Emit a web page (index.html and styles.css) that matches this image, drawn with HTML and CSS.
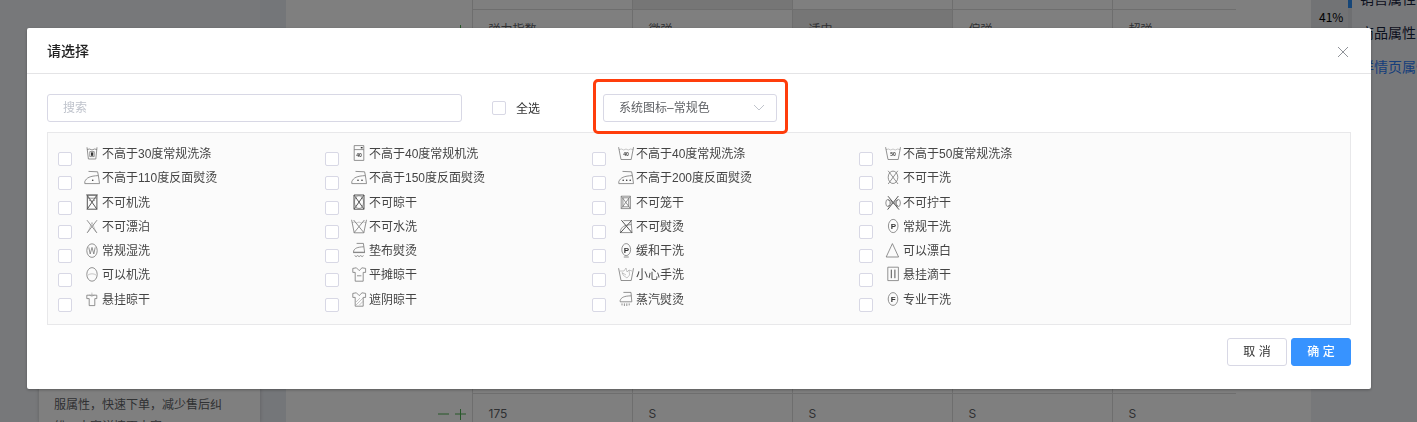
FILE: index.html
```html
<!DOCTYPE html>
<html lang="zh-CN">
<head>
<meta charset="utf-8">
<title>请选择</title>
<link rel="stylesheet" href="styles.css">
</head>
<body>
<svg class="sprite" aria-hidden="true">
  <symbol id="tub" viewBox="0 0 16 16"><path d="M.6 2.2 3 14.5h10.2L15.5 2.2"/><path class="faint" d="M1 4.6 3.5 4l2.2 1L8 4l2.3 1 2.2-1 2.6.6"/></symbol>
  <symbol id="wash30" viewBox="0 0 16 16"><path d="M3 2.3 4.4 14h7.4L13 2.3"/><path d="M3.2 4.5 5.5 4 8 5l2.5-1 2.4.5"/><path d="M5.8 6.6h4.4v5H5.8z"/><path class="solid" d="M7 7.4h2.2v3.4H7z"/></symbol>
  <symbol id="washer" viewBox="0 0 16 16"><path d="M3.2.6h9.6v14.8H3.2zM3.2 4.6h9.6"/><path class="solid" d="M9.8 2h1.8v1.4H9.8z"/></symbol>
  <symbol id="iron" viewBox="0 0 16 16"><path d="M4.5 2.4 13.6 2.8 14.4 6.6 15.5 14.6H.8V12.6C2.5 8.6 6 7 14.4 6.6"/></symbol>
  <symbol id="iron110" viewBox="0 0 16 16"><use href="#iron"/><circle class="dot" cx="8.7" cy="11.3" r=".8"/></symbol>
  <symbol id="iron150" viewBox="0 0 16 16"><use href="#iron"/><circle class="dot" cx="7" cy="11.3" r=".8"/><circle class="dot" cx="11" cy="11.3" r=".8"/></symbol>
  <symbol id="iron200" viewBox="0 0 16 16"><use href="#iron"/><circle class="dot" cx="5.2" cy="11.3" r=".8"/><circle class="dot" cx="8.7" cy="11.3" r=".8"/><circle class="dot" cx="12.2" cy="11.3" r=".8"/></symbol>
  <symbol id="no-dryclean" viewBox="0 0 16 16"><ellipse cx="8" cy="8.3" rx="4.8" ry="6.2"/><path d="M3.2 1.8 13 15M12.8 1.8 3.2 15"/></symbol>
  <symbol id="no-machine" viewBox="0 0 16 16"><path class="strong" d="M3.3 1.2h9.6v14H3.3zM3 1l10 14.4M13 1 3 15.4"/><path d="M2 .8h12M3.3 4.2h9.6M5 6l3 1.4L11 6"/></symbol>
  <symbol id="no-dry" viewBox="0 0 16 16"><path class="strong" d="M3 1h10v14.2H3zM3 1l10 14.2M13 1 3 15.2"/><ellipse cx="8" cy="8.1" rx="4.6" ry="6.4"/></symbol>
  <symbol id="no-tumble" viewBox="0 0 16 16"><path d="M3.2 2.2h9.2v12.4H3.2z"/><path d="M4.9 3.8h5.8v9H4.9zM3.2 2.2l9.2 12.4M12.4 2.2 3.2 14.6"/></symbol>
  <symbol id="no-wring" viewBox="0 0 16 16"><ellipse cx="3" cy="9" rx="2.2" ry="3.6"/><ellipse cx="13.2" cy="9" rx="2.2" ry="3.6"/><path class="strong" d="M3 2.2 14 15.6M13.4 2 2.6 15.6"/><path d="M3 6c4 0 6 5.6 10 5.6M3 12c4 0 6-5.6 10-5.6M4.8 9h7"/></symbol>
  <symbol id="no-bleach" viewBox="0 0 16 16"><path d="M3 2.2 13 15M13 2.2 3 15"/><path class="faint" d="M8 4.4 4 14M8 4.4 12 14"/></symbol>
  <symbol id="no-wash" viewBox="0 0 16 16"><path d="M.6 1.8 3.2 14.8h9.6L15.5 1.8"/><path d="M2.6 2 13 14.8M13.4 2 3 14.8"/><path class="faint" d="M1 4.6 3.5 4l2.2 1L8 4l2.3 1 2.2-1 2.6.6"/></symbol>
  <symbol id="no-iron" viewBox="0 0 16 16"><path d="M5.4 2.6H13l1 12H2.4v-2C3.6 9 6 7 13.4 6.6"/><path class="strong" d="M3.4 2.2 14.2 15M13.8 2.2 2.2 15"/></symbol>
  <symbol id="w-clean" viewBox="0 0 16 16"><ellipse cx="8" cy="8.6" rx="5.2" ry="6.8"/><path d="M4.8 5.4 6.2 12 8 5.4 9.8 12l1.4-6.6"/></symbol>
  <symbol id="cloth-iron" viewBox="0 0 16 16"><path d="M5.6 1.4H12.4l1.2 8.8H2.6V9C3.6 6.4 6 5 12.8 4.8M2 10.6h12"/><path d="m3.6 13.6 1.5 1 1.5-1 1.5 1 1.5-1 1.5 1 1.5-1"/></symbol>
  <symbol id="bleach" viewBox="0 0 16 16"><path d="M7.4 1.6 13.6 15H1.2z"/></symbol>
  <symbol id="machine" viewBox="0 0 16 16"><ellipse cx="8" cy="8.4" rx="5.2" ry="6.8"/><path class="faint" d="M4 9C6 7.4 10 7.4 12 9"/></symbol>
  <symbol id="shirt" viewBox="0 0 16 16"><path d="M5.4 1.8 1.8 2.4v4h2.4v8.8h8V6.4h2.4v-4L11 1.8 8.2 4.6z"/></symbol>
  <symbol id="flat-dry" viewBox="0 0 16 16"><use href="#shirt"/><path d="M6 9.8h4.4"/></symbol>
  <symbol id="hand-wash" viewBox="0 0 16 16"><path d="M.6 2.2 3 14.5h10.2L15.5 2.2"/><path class="faint" d="M2 5h4l2-3 1 4 2-2 .6 5L9 12 5.4 9.4 4 6.6 8 9M11 4l3 1"/></symbol>
  <symbol id="drip-dry" viewBox="0 0 16 16"><path d="M2.8 1.2h10.6v13.4H2.8z"/><path class="strong" d="M6.3 3.6v8.6M9.9 3.6v8.6"/></symbol>
  <symbol id="hang-dry" viewBox="0 0 16 16"><path d="M2.8 4.2h10v3.4h-2v7H5.2v-7H2.8z"/><path class="faint" d="M7.9 4.2V1.6M5.4 4l2.4 1.4L10.4 4"/></symbol>
  <symbol id="shade-dry" viewBox="0 0 16 16"><use href="#shirt"/><path class="faint" d="m5 11 4-4M5 14l7-7M8.4 14 12 10.4"/></symbol>
  <symbol id="steam-iron" viewBox="0 0 16 16"><path d="M5.4 1.4H13l.8 9.4H2.2V9.4C3.2 6.4 6 5 13.4 4.8"/><path d="M4 12.4v2M6.4 12.4V15M8.8 12.4V15M11.2 12.4v2"/></symbol>
</svg>

<div class="page">
  <aside class="side">
    <div class="tip">服属性，快速下单，减少售后纠纷，丰富详情更丰富</div>
  </aside>
  <main class="sheet">
    <table class="grid grid-top">
      <tr class="cut"><td class="ops"></td><td></td><td class="on"></td><td></td><td></td><td class="last"></td></tr>
      <tr><td class="ops"><svg class="pm" viewBox="0 0 32 12"><path d="M21 6h11M26.500 1v11"/></svg></td><td>弹力指数</td><td>微弹</td><td class="on">适中</td><td>偏弹</td><td class="last">超弹</td></tr>
    </table>
    <table class="grid">
      <tr><td class="ops"></td><td></td><td></td><td></td><td></td><td class="last"></td></tr>
      <tr><td class="ops"><svg class="pm" viewBox="0 0 32 12"><path d="M4 6h11M21 6h11M26.500 1v11"/></svg></td><td>175</td><td>S</td><td>S</td><td>S</td><td class="last">S</td></tr>
    </table>
  </main>
  <nav class="steps">
    <div class="percent">41%</div>
    <div class="track"><div class="bar"></div></div>
    <div class="links">
      <a href="#sale">销售属性</a>
      <a href="#goods">商品属性</a>
      <a href="#detail" class="current">详情页属性</a>
    </div>
  </nav>
</div>

<div class="mask">
  <section class="modal" role="dialog" aria-labelledby="title">
    <header class="modal-head">
      <h1 id="title">请选择</h1>
      <button class="close" type="button" aria-label="关闭"><svg viewBox="0 0 12 12"><path d="m1 1 10 10M11 1 1 11"/></svg></button>
    </header>
    <div class="modal-body">
      <div class="tools">
        <input class="search" type="text" placeholder="搜索" aria-label="搜索">
        <label class="all"><input class="check" type="checkbox"><span>全选</span></label>
        <div class="picker">
          <select aria-label="图标类型"><option>系统图标–常规色</option></select>
          <svg class="arrow" viewBox="0 0 12 8"><path d="m1 1 5 5 5-5"/></svg>
        </div>
      </div>
      <div class="options">
        <label class="opt"><input class="check" type="checkbox"><svg class="ico"><use href="#wash30"/></svg><span>不高于30度常规洗涤</span></label>
        <label class="opt"><input class="check" type="checkbox"><svg class="ico" viewBox="0 0 16 16"><use href="#washer"/><text x="8" y="12" font-size="5">40</text></svg><span>不高于40度常规机洗</span></label>
        <label class="opt"><input class="check" type="checkbox"><svg class="ico" viewBox="0 0 16 16"><use href="#tub"/><text x="8" y="11" font-size="5">40</text></svg><span>不高于40度常规洗涤</span></label>
        <label class="opt"><input class="check" type="checkbox"><svg class="ico" viewBox="0 0 16 16"><use href="#tub"/><text x="8" y="11" font-size="5">50</text></svg><span>不高于50度常规洗涤</span></label>
        <label class="opt"><input class="check" type="checkbox"><svg class="ico"><use href="#iron110"/></svg><span>不高于110度反面熨烫</span></label>
        <label class="opt"><input class="check" type="checkbox"><svg class="ico"><use href="#iron150"/></svg><span>不高于150度反面熨烫</span></label>
        <label class="opt"><input class="check" type="checkbox"><svg class="ico"><use href="#iron200"/></svg><span>不高于200度反面熨烫</span></label>
        <label class="opt"><input class="check" type="checkbox"><svg class="ico"><use href="#no-dryclean"/></svg><span>不可干洗</span></label>
        <label class="opt"><input class="check" type="checkbox"><svg class="ico"><use href="#no-machine"/></svg><span>不可机洗</span></label>
        <label class="opt"><input class="check" type="checkbox"><svg class="ico"><use href="#no-dry"/></svg><span>不可晾干</span></label>
        <label class="opt"><input class="check" type="checkbox"><svg class="ico"><use href="#no-tumble"/></svg><span>不可笼干</span></label>
        <label class="opt"><input class="check" type="checkbox"><svg class="ico"><use href="#no-wring"/></svg><span>不可拧干</span></label>
        <label class="opt"><input class="check" type="checkbox"><svg class="ico"><use href="#no-bleach"/></svg><span>不可漂泊</span></label>
        <label class="opt"><input class="check" type="checkbox"><svg class="ico"><use href="#no-wash"/></svg><span>不可水洗</span></label>
        <label class="opt"><input class="check" type="checkbox"><svg class="ico"><use href="#no-iron"/></svg><span>不可熨烫</span></label>
        <label class="opt"><input class="check" type="checkbox"><svg class="ico" viewBox="0 0 16 16"><ellipse cx="8.2" cy="8" rx="4.8" ry="6.6"/><text x="8.4" y="11" font-size="8">P</text></svg><span>常规干洗</span></label>
        <label class="opt"><input class="check" type="checkbox"><svg class="ico"><use href="#w-clean"/></svg><span>常规湿洗</span></label>
        <label class="opt"><input class="check" type="checkbox"><svg class="ico"><use href="#cloth-iron"/></svg><span>垫布熨烫</span></label>
        <label class="opt"><input class="check" type="checkbox"><svg class="ico" viewBox="0 0 16 16"><ellipse cx="8.2" cy="7.6" rx="4.4" ry="6"/><text x="8.4" y="10.500" font-size="8">P</text><path d="M5.8 15h5"/></svg><span>缓和干洗</span></label>
        <label class="opt"><input class="check" type="checkbox"><svg class="ico"><use href="#bleach"/></svg><span>可以漂白</span></label>
        <label class="opt"><input class="check" type="checkbox"><svg class="ico"><use href="#machine"/></svg><span>可以机洗</span></label>
        <label class="opt"><input class="check" type="checkbox"><svg class="ico"><use href="#flat-dry"/></svg><span>平摊晾干</span></label>
        <label class="opt"><input class="check" type="checkbox"><svg class="ico"><use href="#hand-wash"/></svg><span>小心手洗</span></label>
        <label class="opt"><input class="check" type="checkbox"><svg class="ico"><use href="#drip-dry"/></svg><span>悬挂滴干</span></label>
        <label class="opt"><input class="check" type="checkbox"><svg class="ico"><use href="#hang-dry"/></svg><span>悬挂晾干</span></label>
        <label class="opt"><input class="check" type="checkbox"><svg class="ico"><use href="#shade-dry"/></svg><span>遮阴晾干</span></label>
        <label class="opt"><input class="check" type="checkbox"><svg class="ico"><use href="#steam-iron"/></svg><span>蒸汽熨烫</span></label>
        <label class="opt"><input class="check" type="checkbox"><svg class="ico" viewBox="0 0 16 16"><ellipse cx="8" cy="8" rx="4.8" ry="6.4"/><text x="8.2" y="11" font-size="8">F</text></svg><span>专业干洗</span></label>
      </div>
    </div>
    <footer class="modal-foot">
      <button class="btn" type="button">取 消</button>
      <button class="btn primary" type="button">确 定</button>
    </footer>
  </section>
</div>
</body>
</html>
```

FILE: styles.css
```css
* { box-sizing: border-box; }

body {
  margin: 0;
  overflow: hidden;
  background: #eff1f5;
  color: #515a6e;
  font: 12px/18px "Liberation Sans", "Noto Sans CJK SC", sans-serif;
}

input, select, button {
  margin: 0;
  font: inherit;
  color: inherit;
}

.sprite {
  position: absolute;
  width: 0;
  height: 0;
}

/* Page under the dialog */
.page {
  display: flex;
  height: 100vh;
  overflow: hidden;
}

.side {
  display: flex;
  flex: none;
  width: 286px;
  padding-left: 39px;
  border-right: 26px solid #e9ecf2;
}

.tip {
  flex: 1;
  margin-top: 360px;
  padding: 34px 15px 0;
  background: #fff;
  box-shadow: 0 0 4px rgba(0, 0, 0, .2);
  color: #606266;
  line-height: 22px;
}

.sheet {
  flex: 1;
  padding-right: 75px;
  background: #fff;
}

.grid {
  width: 100%;
  border-collapse: collapse;
  table-layout: fixed;
  color: #606266;
  font-family: Inter, "Noto Sans CJK SC", sans-serif;
}

.grid-top { margin-bottom: 303px; }

.grid td {
  width: 160px;
  height: 40px;
  padding: 2px 16px 0;
  border: 1px solid #dcdcdc;
}

.grid .cut td { height: 9px; border-top: 0; }

.grid td.ops {
  width: 186px;
  padding: 0 4px;
  border-width: 0 1px 0 0;
  text-align: right;
}

.grid td.last {
  width: auto;
  border-right: 0;
}

.grid td.on { background: #ececec; }

.pm {
  display: inline-block;
  width: 32px;
  height: 12px;
  margin-right: 2px;
  vertical-align: middle;
  fill: none;
  stroke: #4caf50;
}

.steps {
  display: flex;
  flex: none;
  width: 106px;
}

.percent {
  flex: none;
  width: 37px;
  height: 33px;
  padding: 8px 5px 0 8px;
  background: #e4e6ea;
  color: #000;
  font-family: "Noto Sans CJK SC", sans-serif;
}

.track {
  flex: none;
  width: 4px;
  height: 80px;
  background: #dcdee2;
}

.bar {
  height: 8px;
  background: #2d8cf0;
}

.links {
  display: flex;
  flex: none;
  flex-direction: column;
  padding-left: 8px;
  margin-top: -18px;
  font-size: 14px;
  line-height: 34px;
  white-space: nowrap;
}

.links a {
  color: #17233d;
  text-decoration: none;
}

.links a.current { color: #2d7cf6; }

/* Dialog */
.mask {
  position: fixed;
  inset: 0;
  padding: 28px 46px 0 27px;
  background: rgba(0, 0, 0, .5);
}

.modal {
  border-radius: 2px;
  background: #fff;
  box-shadow: 0 1px 3px rgba(0, 0, 0, .3);
}

.modal-head {
  display: flex;
  align-items: center;
  justify-content: space-between;
  height: 46px;
  padding: 0 22px 0 20px;
  border-bottom: 1px solid #e4e4e6;
}

h1 {
  margin: 0;
  color: #222;
  font-size: 14px;
  font-weight: 500;
}

.close {
  display: flex;
  padding: 0;
  margin-top: 2px;
  border: 0;
  background: none;
}

.close svg {
  width: 12px;
  height: 12px;
  fill: none;
  stroke: #909399;
}

.modal-body { padding: 20px 20px 0; }

.tools {
  display: flex;
  align-items: center;
  margin-bottom: 10px;
}

.search {
  width: 415px;
  height: 28px;
  padding: 0 15px;
  border: 1px solid #d8d8e5;
  border-radius: 3px;
  background: #fff;
}

.search::placeholder { color: #bfc3cc; }

.check {
  flex: none;
  width: 14px;
  height: 14px;
  border: 1px solid #d8d8e5;
  border-radius: 2px;
  background: #fff;
  appearance: none;
}

.all {
  display: flex;
  align-items: center;
  gap: 10px;
  margin: 0 63px 0 30px;
  color: #333;
  line-height: 20px;
}

.all span { padding-top: 2px; }

.picker { position: relative; }

/* Highlight frame around the drop-down */
.picker::after {
  content: "";
  position: absolute;
  inset: -15px -11px -12px -10px;
  border: 3px solid #ff3d0c;
  border-radius: 5px;
  pointer-events: none;
}

.picker select {
  display: block;
  width: 174px;
  height: 28px;
  padding: 0 15px;
  border: 1px solid #d8d8e5;
  border-radius: 3px;
  background: #fff;
  color: #606266;
  appearance: none;
}

.arrow {
  position: absolute;
  top: 10px;
  right: 12px;
  width: 12px;
  height: 8px;
  fill: none;
  stroke: #c0c4cc;
  pointer-events: none;
}

.options {
  display: grid;
  grid-template-columns: repeat(auto-fill, 267px);
  grid-auto-rows: 1fr;
  min-height: 193px;
  padding: 9px 10px 12px;
  border: 1px solid #e8e8ea;
  background: #fbfbfb;
}

.opt {
  display: flex;
  align-items: flex-start;
  color: #444;
  line-height: 24px;
}

.opt .check {
  margin: 10px 12px 0 0;
}

.ico {
  flex: none;
  width: 16px;
  height: 16px;
  margin: 3px 2px 0 0;
  fill: none;
  stroke: #777;
  stroke-width: .8;
}

.faint { opacity: .5; }
.strong { stroke: #555; stroke-width: 1; }
.solid, .dot { fill: #333; stroke: none; }

.ico text {
  fill: #333;
  stroke: none;
  font-family: "Liberation Sans", sans-serif;
  font-weight: bold;
  text-anchor: middle;
}

.modal-foot {
  display: flex;
  justify-content: flex-end;
  gap: 4px;
  padding: 13px 20px 23px;
}

.btn {
  width: 60px;
  height: 28px;
  padding: 0;
  border: 1px solid #d8d8e5;
  border-radius: 3px;
  background: #fff;
  color: #333;
}

.btn.primary {
  border-color: #3793ff;
  background: #3793ff;
  color: #fff;
  font-weight: 500;
}
```
